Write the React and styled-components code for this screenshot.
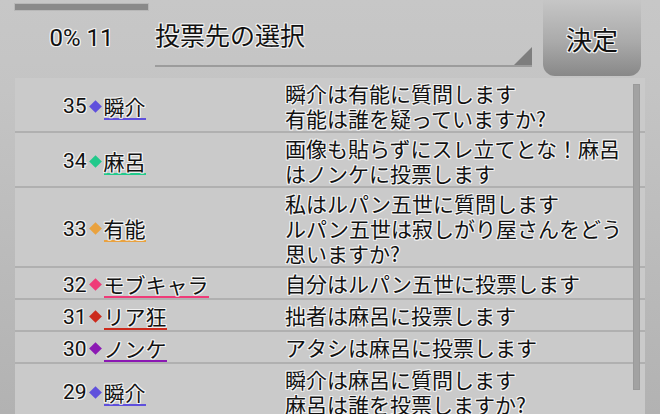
import React from "react";
import styled, { createGlobalStyle } from "styled-components";

const Global = createGlobalStyle`
  html, body { margin: 0; padding: 0; }
  body {
    width: 660px;
    height: 414px;
    overflow: hidden;
    background: linear-gradient(180deg, #c7c7c7 0px, #c4c4c4 90px, #b2b2b2 414px);
    font-family: "Roboto", "Noto Sans CJK JP", sans-serif;
    color: #111111;
  }
`;

const halo = `
  text-shadow:
    -1px -1px 0 #f2f2f2, 1px -1px 0 #f2f2f2, -1px 1px 0 #f2f2f2, 1px 1px 0 #f2f2f2,
    0 -1px 0 #f2f2f2, 0 1px 0 #f2f2f2, -1px 0 0 #f2f2f2, 1px 0 0 #f2f2f2;
`;

const Screen = styled.div`
  width: 660px;
  height: 414px;
  display: flex;
  flex-direction: column;
  overflow: hidden;
`;

const Header = styled.div`
  height: 78px;
  display: flex;
  align-items: stretch;
  padding: 0 19px 0 15px;
  box-sizing: border-box;
`;

const Progress = styled.div`
  width: 133px;
  display: flex;
  flex-direction: column;
  align-items: center;
`;

const Bar = styled.div`
  margin-top: 4px;
  width: 133px;
  height: 6px;
  background: #8a8a8a;
  box-shadow: 0 0 0 1px #b8b8b8;
`;

const Count = styled.div`
  margin-top: 14px;
  font-family: "Roboto", sans-serif;
  font-size: 24px;
  line-height: 28px;
  ${halo}
`;

const Title = styled.div`
  position: relative;
  margin-left: 7px;
  width: 377px;
  height: 67px;
  border-bottom: 2px solid #9c9c9c;
  box-sizing: border-box;
  font-family: "Noto Sans CJK JP", sans-serif;
  font-size: 25px;
  line-height: 30px;
  padding-top: 19px;
  ${halo}
`;

const Corner = styled.div`
  position: absolute;
  right: 0;
  bottom: 0;
  width: 0;
  height: 0;
  border-left: 18px solid transparent;
  border-bottom: 18px solid #7e7e7e;
`;

const Decide = styled.div`
  margin-left: 11px;
  width: 98px;
  height: 76px;
  border-radius: 0 0 12px 12px;
  background: linear-gradient(180deg, #c6c6c6 0%, #aaaaaa 55%, #888888 100%);
  display: flex;
  align-items: center;
  justify-content: center;
  font-family: "Noto Sans CJK JP", sans-serif;
  font-size: 26px;
  ${halo}
`;

const Panel = styled.div`
  position: relative;
  margin-left: 15px;
  width: 630px;
  flex: 1;
  background: #cacaca;
  overflow: hidden;
`;

const Row = styled.div`
  display: grid;
  grid-template-columns: 270px 1fr;
  padding-top: 3px;
  border-bottom: 2px solid #b0b0b0;
`;

const Who = styled.div`
  display: flex;
  align-items: center;
  padding-left: 48px;
  font-size: 21px;
  line-height: 24px;
  ${halo}
`;

const Num = styled.span`
  font-family: "Roboto", sans-serif;
  font-size: 21px;
`;

const Diamond = styled.span`
  width: 9px;
  height: 9px;
  margin: 0 4px;
  background: ${(p) => p.$c};
  transform: rotate(45deg);
  flex: none;
`;

const Name = styled.span`
  font-family: "Noto Sans CJK JP", sans-serif;
  border-bottom: 2px solid ${(p) => p.$c};
  padding-top: 1px;
`;

const Msg = styled.div`
  font-family: "Noto Sans CJK JP", sans-serif;
  font-size: 21px;
  line-height: 25px;
  white-space: nowrap;
  ${halo}
`;

const Scroll = styled.div`
  position: absolute;
  top: 6px;
  right: 5px;
  width: 5px;
  height: 304px;
  background: #a2a2a2;
  border: 1px solid #9a9a9a;
`;

const C = {
  shun: "#5f50dc",
  maro: "#22c98b",
  yuno: "#e9a23f",
  mob: "#ef3b78",
  ria: "#cc2a1c",
  non: "#8b19b3",
};

const rows = [
  { n: 35, name: "瞬介", c: C.shun, msg: ["瞬介は有能に質問します", "有能は誰を疑っていますか?"] },
  { n: 34, name: "麻呂", c: C.maro, msg: ["画像も貼らずにスレ立てとな！麻呂", "はノンケに投票します"] },
  { n: 33, name: "有能", c: C.yuno, msg: ["私はルパン五世に質問します", "ルパン五世は寂しがり屋さんをどう", "思いますか?"] },
  { n: 32, name: "モブキャラ", c: C.mob, msg: ["自分はルパン五世に投票します"] },
  { n: 31, name: "リア狂", c: C.ria, msg: ["拙者は麻呂に投票します"] },
  { n: 30, name: "ノンケ", c: C.non, msg: ["アタシは麻呂に投票します"] },
  { n: 29, name: "瞬介", c: C.shun, msg: ["瞬介は麻呂に質問します", "麻呂は誰を投票しますか?"] },
];

export default function App() {
  return (
    <>
      <Global />
      <Screen>
        <Header>
          <Progress>
            <Bar />
            <Count>0% 11</Count>
          </Progress>
          <Title>
            投票先の選択
            <Corner />
          </Title>
          <Decide>決定</Decide>
        </Header>
        <Panel>
          {rows.map((r, i) => (
            <Row key={i}>
              <Who>
                <Num>{r.n}</Num>
                <Diamond $c={r.c} />
                <Name $c={r.c}>{r.name}</Name>
              </Who>
              <Msg>
                {r.msg.map((m, j) => (
                  <div key={j}>{m}</div>
                ))}
              </Msg>
            </Row>
          ))}
          <Scroll />
        </Panel>
      </Screen>
    </>
  );
}
